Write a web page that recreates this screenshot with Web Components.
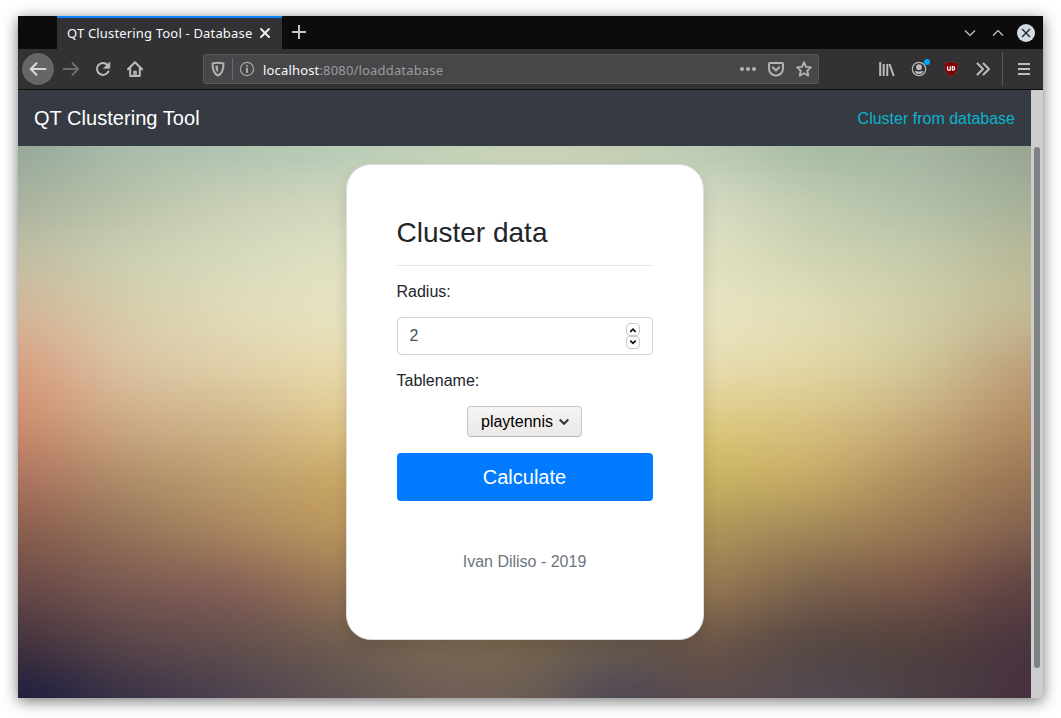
<!DOCTYPE html>
<html lang="en">
<head>
<meta charset="utf-8">
<title>QT Clustering Tool - Database</title>
<style>
html,body{margin:0;height:100%;background:#fff;overflow:hidden}
body{box-sizing:border-box;padding:16px 18px 20px;font-family:"Liberation Sans",Arial,sans-serif}
</style>
</head>
<body>
<browser-window>
  <tab-strip slot="tabs">QT Clustering Tool - Database</tab-strip>
  <tool-bar slot="tools"><span slot="host">localhost</span><span slot="path">:8080/loaddatabase</span></tool-bar>
  <site-nav slot="page"><span slot="brand">QT Clustering Tool</span><span slot="link">Cluster from database</span></site-nav>
  <mesh-backdrop slot="page">
    <cluster-card>
      <span slot="title">Cluster data</span>
      <form-label>Radius:</form-label>
      <number-field>2</number-field>
      <form-label>Tablename:</form-label>
      <select-box>playtennis</select-box>
      <submit-button>Calculate</submit-button>
      <span slot="footer">Ivan Diliso - 2019</span>
    </cluster-card>
  </mesh-backdrop>
</browser-window>
<script>
const define = (name, html) => customElements.define(name, class extends HTMLElement {
  constructor() { super(); this.attachShadow({mode: 'open'}).innerHTML = html; }
});

define('browser-window', `<style>
:host{display:flex;flex-direction:column;width:1025px;height:682px;box-shadow:0 3px 14px rgba(0,0,0,.55)}
.view{flex:1;min-height:0;display:flex}
.doc{flex:1;min-width:0;display:flex;flex-direction:column}
.scroll{width:12px;background:#cdcdcd;box-sizing:border-box;padding:57px 3px 0}
.thumb{height:521px;border-radius:3px;background:#7d8282}
</style><slot name="tabs"></slot><slot name="tools"></slot>
<div class="view"><div class="doc"><slot name="page"></slot></div><div class="scroll"><div class="thumb"></div></div></div>`);

define('tab-strip', `<style>
:host{display:flex;height:33px;background:#0c0c0c;font:13px "Noto Sans",sans-serif;color:#f9f9fa}
.tab{box-sizing:border-box;margin-left:39px;width:225px;height:33px;background:#323234;border-top:2px solid #0a84ff;display:flex;align-items:center;padding:0 0 0 10px}
.t{width:190px;white-space:nowrap;line-height:31px;letter-spacing:.175px}
svg{fill:none;display:block}
.plus{margin:9px 0 0 10px}
.ctl{margin-left:auto;display:flex;align-items:center;gap:14px;padding-right:8px}
</style><div class="tab"><span class="t"><slot></slot></span>
<svg style="margin-top:-2px" width="16" height="16" viewBox="0 0 16 16" stroke="#f4f4f4" stroke-width="1.9" stroke-linecap="round"><path d="M4 4l8 8M12 4l-8 8"/></svg></div>
<svg class="plus" width="14" height="14" viewBox="0 0 14 14" stroke="#c4c4c5" stroke-width="2"><path d="M7 0v14M0 7h14"/></svg>
<div class="ctl">
<svg width="14" height="18" viewBox="0 0 14 18" stroke="#c6cbd4" stroke-width="1.2"><path d="M2 6.500l5 5 5-5"/></svg>
<svg width="14" height="18" viewBox="0 0 14 18" stroke="#c6cbd4" stroke-width="1.2"><path d="M2 11.500l5-5 5 5"/></svg>
<svg style="margin-left:-2px" width="18" height="18" viewBox="0 0 18 18"><circle cx="9" cy="9" r="9" fill="#d3dae3"/><path d="M5 5l8 8M13 5l-8 8" stroke="#181b20" stroke-width="1.200"/></svg>
</div>`);

define('tool-bar', `<style>
:host{box-sizing:border-box;display:flex;align-items:center;height:41px;background:#323234;border-bottom:1px solid #0c0c0d;padding-left:4px;font:13px "Noto Sans",sans-serif;color:#9b9b9d}
svg{display:block;fill:none;stroke:#bcbcbd;stroke-width:2;stroke-linecap:round;stroke-linejoin:round}
.c{width:32px;height:32px;display:flex;align-items:center;justify-content:center;flex:none}
.back{border-radius:50%;background:#666667;box-shadow:0 0 0 .5px #29292a;margin-right:1px}
.url{box-sizing:border-box;display:flex;align-items:center;width:616px;height:30px;margin:0 52px;background:#474749;border:1px solid #59595b;border-radius:3px;padding-left:6px}
.sep{width:1px;height:22px;background:#626a77;margin:0 6px}
.txt{flex:1;padding-left:8px;line-height:20px;padding-top:1px;letter-spacing:.17px}
.host{color:#f9f9fa}
.act{display:flex;gap:12px;padding-right:6px}
.bar{width:1px;height:34px;background:#59595b;margin:0 5px 0 3px}
.acc{position:relative}
.dot{position:absolute;right:5px;top:6px;width:6px;height:6px;border-radius:50%;background:#00a8f8}
</style>
<div class="c back"><svg width="18" height="16" viewBox="0 0 18 16" style="stroke:#dadadb"><path d="M2 8h14.500M7.500 2.200L1.700 8l5.800 5.800"/></svg></div>
<div class="c"><svg width="18" height="16" viewBox="0 0 18 16" style="stroke:#6c6c6e"><path d="M1.500 8H16M10.500 2.200L16.300 8l-5.800 5.800"/></svg></div>
<div class="c"><svg width="16" height="16" viewBox="0 0 16 16"><path d="M13.400 10.500A6 6 0 1 1 12.300 3.700"/><path d="M14.800 1.300v5.900H8.900z" style="fill:#bcbcbd;stroke-width:.8;stroke-linejoin:miter"/></svg></div>
<div class="c"><svg width="16" height="16" viewBox="0 0 16 16"><path d="M1 8.300L8 1.300l7 7M3.200 7.500V15h9.600V7.500"/><path d="M7 15v-4.500h2V15" style="stroke-width:1.600"/></svg></div>
<div class="url">
<svg width="16" height="16" viewBox="0 0 16 16" style="stroke:#b3b3b4"><path d="M8 1.700c2 0 4 .4 5.500.8 0 6-.8 10-5.500 12C3.300 12.500 2.500 8.500 2.500 2.500 4 2.100 6 1.700 8 1.700z"/><path d="M8 4.800c-.9 0-2 .1-2.600.3.100 3.300.8 5.200 2.600 6.400z" style="fill:#b3b3b4;stroke:none"/></svg>
<span class="sep"></span>
<svg width="16" height="16" viewBox="0 0 16 16" style="stroke:#a8a8a9"><circle cx="8" cy="8" r="6.600" style="stroke-width:1.200"/><path d="M8 7.500v3.800M8 4.700v.1"/></svg>
<span class="txt"><span class="host"><slot name="host"></slot></span><slot name="path"></slot></span>
<div class="act">
<svg width="16" height="16" viewBox="0 0 16 16" style="fill:#b3b3b4;stroke:none"><circle cx="2" cy="8" r="2"/><circle cx="8" cy="8" r="2"/><circle cx="14" cy="8" r="2"/></svg>
<svg width="16" height="16" viewBox="0 0 16 16" style="stroke:#b3b3b4"><path d="M2 2h12q1 0 1 1v4.500a7 7 0 0 1-14 0V3q0-1 1-1zM4.700 6.300L8 9.400l3.300-3.100"/></svg>
<svg width="16" height="16" viewBox="0 0 16 16" style="stroke:#b3b3b4;stroke-width:1.800"><path d="M8 1.200l2 4.600 5 .5-3.700 3.400 1 5L8 12.200l-4.300 2.500 1-5L1 6.300l5-.5z"/></svg>
</div></div>
<div class="c"><svg width="16" height="16" viewBox="0 0 16 16" style="stroke-linecap:butt"><path d="M1.200 1v14M4.700 3v12M8.300 3v12M10.500 3l4.200 12"/></svg></div>
<div class="c acc"><svg width="16" height="16" viewBox="0 0 16 16"><circle cx="8" cy="8" r="6.700" style="stroke-width:1.200"/><circle cx="8" cy="6.200" r="2.900" style="fill:#bcbcbd;stroke:none"/><path d="M3.500 9.700q1.500.8 2.400.4 2 1 4.200 0 .9.400 2.400-.4-.8 3.300-4.500 3.400-3.700-.1-4.500-3.400z" style="fill:#bcbcbd;stroke:none"/></svg><span class="dot"></span></div>
<div class="c"><svg width="16" height="16" viewBox="0 0 16 16"><path d="M8 .4c2 1.100 4 1.600 6.800 1.700C14.900 9 13.300 12.900 8 15.600 2.700 12.900 1.100 9 1.200 2.100 4 2 6 1.500 8 .4z" style="fill:#800000;stroke:#7a4040;stroke-width:.6"/><path d="M4.500 5.700v2.200q0 1.300 1.400 1.300h1.300V5.700M9.300 5.700h.6q1.800 0 1.800 1.700t-1.800 1.700h-.6z" style="stroke:#fff;stroke-width:1.200"/></svg></div>
<div class="c"><svg width="16" height="16" viewBox="0 0 16 16"><path d="M2.500 2.500L8 8l-5.500 5.500M8.500 2.500L14 8l-5.500 5.500"/></svg></div>
<span class="bar"></span>
<div class="c"><svg width="14" height="14" viewBox="0 0 14 14" style="stroke-linecap:butt"><path d="M1 2h12M1 7h12M1 12h12"/></svg></div>`);

define('site-nav', `<style>
:host{box-sizing:border-box;display:flex;align-items:center;justify-content:space-between;height:56px;flex:none;padding:0 16px;background:#363a42;color:#fff;font-size:20px;letter-spacing:.04px}
.l{font-size:16px;color:#0cb4ce;padding-top:2px;letter-spacing:0}
</style><slot name="brand"></slot><span class="l"><slot name="link"></slot></span>`);

/* Colour samples of the backdrop; a spline fills in between them so no seams show. */
const COLS = [0, 110, 220, 325, 430, 507, 600, 690, 795, 905, 1013];
const ROWS = [
 '98a99c a9bba9 b0c4b1 b8cbb6 c2d0b7 c6d1b5 c2ceb4 b9c9b2 aabca5 a5b5a0 98a692',
 'aab39f b9c2aa c8cfb6 d0d6bd d7dbc1 dadcc3 d8dbc2 d3d8c0 bfcab0 b1bea7 a6b099',
 'c1bda3 cbceb1 d6d9bc dfe0c2 e4e3c5 e5e4c5 e3e2c3 dfe0c0 d0d4b3 c4c9aa b8b998',
 'd2b698 d6ccab e0dab9 e6e2c0 e9e5c3 eae6c4 e9e5c2 e7e3c0 dfdbb6 cfcca6 c1b893',
 'd7a184 d9c1a0 dfcfa8 e7daac e9deb0 eadfb0 e9deb0 e6dbae e0d5a3 cfc396 bda07c',
 'cb8e70 ccaa86 d1b78b dec68c e2cd88 e3d085 e0cd82 dcc981 d6c183 c5aa7a b18c66',
 'ad7560 b18e6b bd9f6f caa968 d0b266 d2b764 ceb662 c8b362 c4a867 ae8e60 9b7656',
 '8a5e4f 95735a a9855f b8945d b8985c b89b5b b4995a ab955a a08758 967453 80604e',
 '694a48 795951 866256 977656 9a7c57 987c56 967a54 937752 7c624d 765648 604343',
 '44343f 59454a 64504e 715e50 7c6a54 786750 6b5d50 6c5749 594a45 54423f 4b3640',
 '22203f 3c3447 4f4350 5f5352 6e5e56 6a5c54 524a56 5a4b4c 534951 4b3f46 47323f'];
const STEP = 5;
const spline = (p0, p1, p2, p3, t) => p1 + .5 * t * (p2 - p0 + t * (2 * p0 - 5 * p1 + 4 * p2 - p3 + t * (3 * (p1 - p2) + p3 - p0)));
const refine = (list, mix) => {
  const out = [], n = list.length - 1;
  for (let i = 0; i < n; i++) for (let s = 0; s < STEP; s++)
    out.push(mix(list[Math.max(0, i - 1)], list[i], list[i + 1], list[Math.min(n, i + 2)], s / STEP));
  out.push(list[n]);
  return out;
};
const mixRGB = (a, b, c, d, t) => b.map((_, k) => spline(a[k], b[k], c[k], d[k], t));
const mixRow = (a, b, c, d, t) => b.map((_, k) => mixRGB(a[k], b[k], c[k], d[k], t));
const parsed = ROWS.map(r => r.split(' ').map(h => [0, 2, 4].map(o => parseInt(h.slice(o, o + 2), 16))));
const xs = refine(COLS, (a, b, c, d, t) => b + (c - b) * t);
const grid = refine(parsed.map(r => refine(r, mixRGB)), mixRow);
const last = grid.length - 1;
const layers = grid.map((row, i) => {
  const stops = row.map((c, k) => `rgb(${c.map(v => Math.round(v)).join(' ')}) ${xs[k].toFixed(1)}px`).join(',');
  const fade = `linear-gradient(transparent ${(i - 1) * 100 / last}%,#000 ${i * 100 / last}%)`;
  return `<i style="background:linear-gradient(90deg,${stops});${i ? `-webkit-mask-image:${fade};mask-image:${fade}` : ''}"></i>`;
}).join('');
define('mesh-backdrop', `<style>
:host{flex:1;min-height:0;display:grid;justify-items:center;align-items:start;overflow:hidden}
i{grid-area:1/1;width:100%;height:552px}
.in{grid-area:1/1;z-index:1;margin:18px 0 0 1px}
</style>${layers}<div class="in"><slot></slot></div>`);

define('cluster-card', `<style>
:host{box-sizing:border-box;display:block;width:358px;height:476px;padding:51px 50px 0;background:#fff;border:1px solid #d9dce0;border-radius:25px;box-shadow:0 8px 16px rgba(0,0,0,.13);color:#212529;font-size:16px;line-height:24px}
.h{font-size:28px;line-height:34px;padding-bottom:15px;border-bottom:1px solid #e5e5e5;margin-bottom:14px}
.h slot{margin-left:-.5px;display:block}
.f{color:#6c757d;text-align:center;margin:49px 1px 0 0}
</style><div class="h"><slot name="title"></slot></div><slot></slot><div class="f"><slot name="footer"></slot></div>`);

define('form-label', `<style>:host{display:block;height:24px;margin:0 0 13px -.5px}</style><slot></slot>`);

define('number-field', `<style>
:host{box-sizing:border-box;display:flex;align-items:center;justify-content:space-between;height:38px;border:1px solid #ced4da;border-radius:4px;padding:0 12px 0 11.5px;color:#495057;margin-bottom:14px}
.s{display:flex;flex-direction:column}
b{box-sizing:border-box;width:14px;height:13px;border:1px solid #cdc7c2;border-radius:4px;display:flex;align-items:center;justify-content:center}
svg{fill:none;stroke:#111;stroke-width:1.7}
</style><slot></slot><div class="s"><b><svg width="8" height="6" viewBox="0 0 8 6"><path d="M1.300 4.800L4 2.100l2.700 2.700"/></svg></b><b><svg width="8" height="6" viewBox="0 0 8 6"><path d="M1.300 .7L4 3.400 6.700 .7"/></svg></b></div>`);

define('select-box', `<style>
:host{box-sizing:border-box;display:flex;align-items:center;gap:6px;width:115px;height:31px;margin:0 auto 16px 70px;padding-left:13px;border:1px solid #cdc7c2;border-bottom-color:#bfb8b1;border-radius:4px;background:linear-gradient(#f6f5f3,#ebe9e7);color:#000}
svg{fill:none;stroke:#2e3436;stroke-width:2}
</style><slot></slot><svg width="10" height="8" viewBox="0 0 10 8"><path d="M.7 1.500L5 5.800l4.300-4.300"/></svg>`);

define('submit-button', `<style>
:host{box-sizing:border-box;display:block;height:48px;line-height:48px;padding-right:1px;border-radius:4px;background:#007bff;color:#fff;font-size:20px;text-align:center}
</style><slot></slot>`);
</script>
</body>
</html>
